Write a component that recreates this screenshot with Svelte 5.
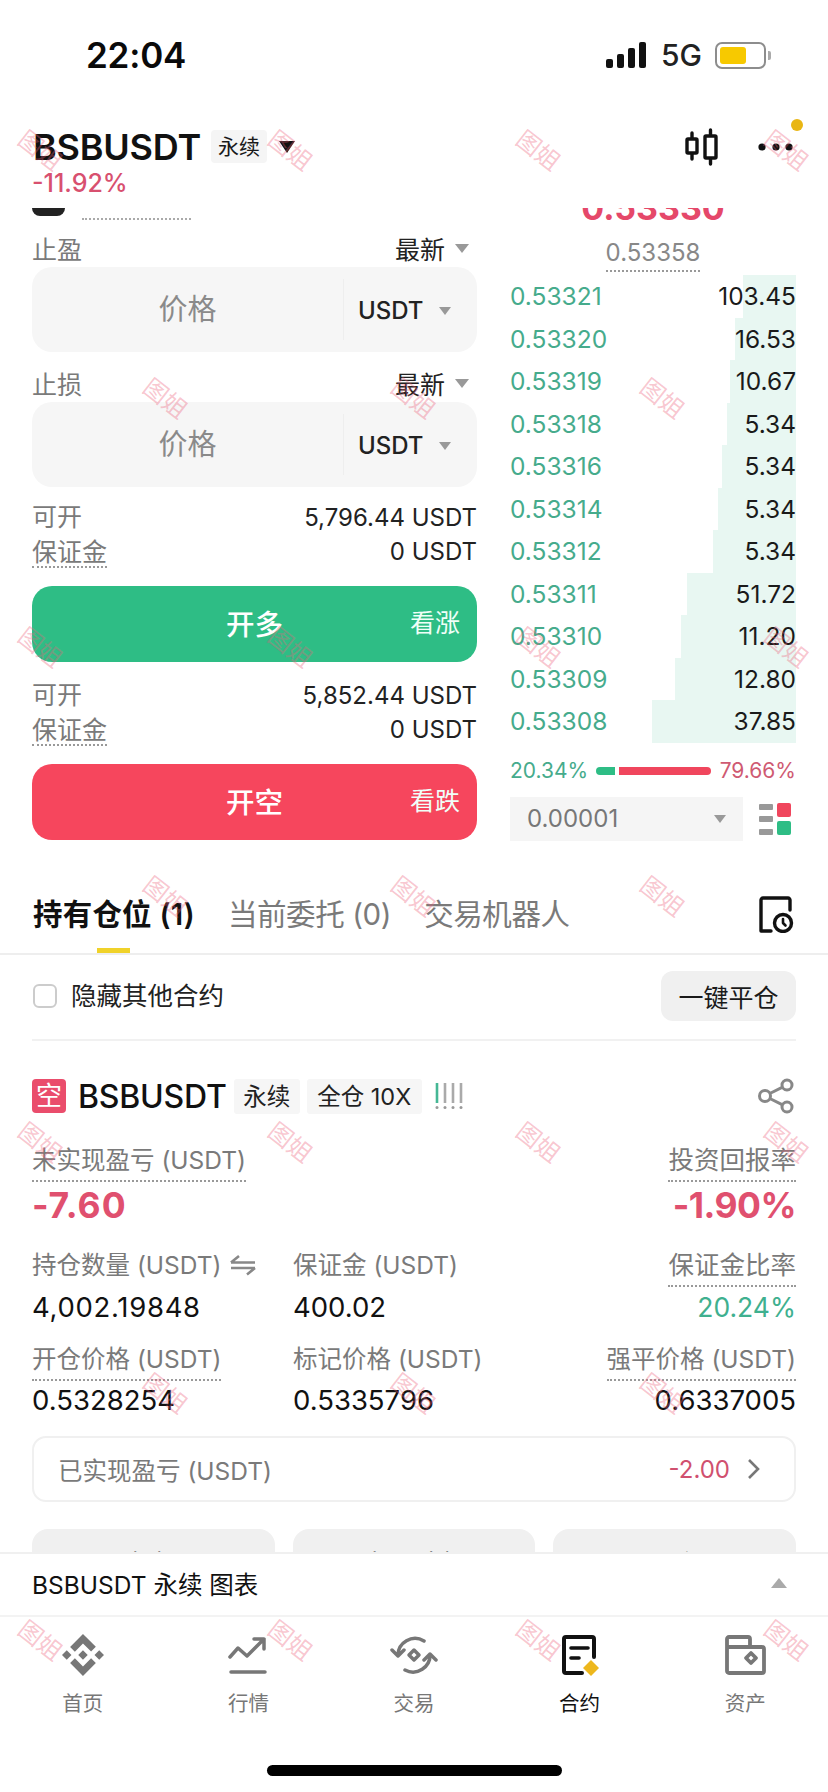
<script>
  const book = [
    ['0.53321','103.45',53],['0.53320','16.53',61],['0.53319','10.67',66],['0.53318','5.34',69],
    ['0.53316','5.34',74],['0.53314','5.34',78],['0.53312','5.34',83],['0.53311','51.72',109],
    ['0.53310','11.20',115],['0.53309','12.80',121],['0.53308','37.85',144]
  ];
  const a = [40,290,538,786], b = [165,413,662];
  const marks = [
    ...a.map(x=>[x,151]), ...b.map(x=>[x,399]), ...a.map(x=>[x,648]), ...b.map(x=>[x,897]),
    ...a.map(x=>[x,1143]), ...b.map(x=>[x,1394]), ...a.map(x=>[x,1641])
  ];
</script>

<div class="app">
  <div class="status">
    <span class="time">22:04</span>
    <div class="status-r">
      <svg width="42" height="28" viewBox="0 0 42 28"><rect x="0" y="18" width="7" height="9" rx="2"/><rect x="11" y="13" width="7" height="14" rx="2"/><rect x="22" y="7" width="7" height="20" rx="2"/><rect x="33" y="1" width="7" height="26" rx="2"/></svg>
      <span class="net">5G</span>
      <div class="battery"><div class="level"></div></div>
      <div class="nub"></div>
    </div>
  </div>

  <header class="header">
    <div class="title-row">
      <span class="symbol">BSBUSDT</span>
      <span class="tag">永续</span>
      <span class="tri-black"></span>
      <div class="head-icons">
        <svg width="36" height="38" viewBox="0 0 36 38" fill="none" stroke="#111" stroke-width="3.4" stroke-linecap="round"><rect x="3" y="11" width="10" height="14" rx="1"/><path d="M8 5v5M8 26v5"/><rect x="21" y="8" width="11" height="22" rx="1"/><path d="M26.500 2v5M26.500 31v5"/></svg>
        <svg class="dots" width="36" height="10" viewBox="0 0 36 10" fill="#111"><circle cx="4" cy="5" r="3.600"/><circle cx="18" cy="5" r="3.600"/><circle cx="31" cy="5" r="3.600"/></svg>
      </div>
      <span class="badge"></span>
    </div>
    <div class="change">-11.92%</div>
  </header>

  <main class="scroll">
    <section class="trade">
      <div class="form">
        <div class="prev"><span class="pill"></span><span class="prev-dots"></span></div>
        <div class="lab-row first"><span class="muted">止盈</span><span class="pick">最新<i class="tri"></i></span></div>
        <div class="input"><span class="ph">价格</span><span class="unit">USDT<i class="tri small"></i></span></div>
        <div class="lab-row"><span class="muted">止损</span><span class="pick">最新<i class="tri"></i></span></div>
        <div class="input"><span class="ph">价格</span><span class="unit">USDT<i class="tri small"></i></span></div>
        <div class="info top"><span class="muted cap">可开</span><span>5,796.44 USDT</span></div>
        <div class="info"><span class="muted dotted">保证金</span><span>0 USDT</span></div>
        <button class="action long"><span>开多</span><em>看涨</em></button>
        <div class="info top2"><span class="muted cap">可开</span><span>5,852.44 USDT</span></div>
        <div class="info"><span class="muted dotted">保证金</span><span>0 USDT</span></div>
        <button class="action short"><span>开空</span><em>看跌</em></button>
      </div>
      <div class="side">
        <div class="last"><span>0.53330</span></div>
        <div class="mark"><span>0.53358</span></div>
        <div class="book">
          {#each book as [p, q, w]}
            <div class="level-row">
              <div class="depth" style="width:{w}px"></div>
              <span class="price">{p}</span><span class="qty">{q}</span>
            </div>
          {/each}
        </div>
        <div class="ratio">
          <span class="g">20.34%</span>
          <span class="bar-g"></span><span class="bar-r"></span>
          <span class="r">79.66%</span>
        </div>
        <div class="sel-row">
          <div class="sel"><span>0.00001</span><i class="tri small"></i></div>
          <svg width="32" height="32" viewBox="0 0 32 32"><rect x="0" y="1" width="14" height="6" rx="1" fill="#999"/><rect x="0" y="13" width="14" height="6" rx="1" fill="#999"/><rect x="0" y="26" width="14" height="6" rx="1" fill="#999"/><rect x="18" y="0" width="14" height="14" rx="2" fill="#f0465d"/><rect x="18" y="18" width="14" height="14" rx="2" fill="#2ebd85"/></svg>
        </div>
      </div>
    </section>

    <nav class="tabs">
      <span class="tab on">持有仓位 (1)<i class="under"></i></span>
      <span class="tab">当前委托 (0)</span>
      <span class="tab">交易机器人</span>
      <svg class="hist" width="38" height="38" viewBox="0 0 38 38" fill="none" stroke="#111" stroke-width="3.400" stroke-linecap="round" stroke-linejoin="round"><path d="M32 15V5a2 2 0 0 0-2-2H5a2 2 0 0 0-2 2v31h10"/><circle cx="25" cy="28" r="8.500"/><path d="M25 24v4l2.500 2.500" stroke-width="2.600"/></svg>
    </nav>

    <div class="hide-row">
      <span class="check"></span>
      <span class="hide-t">隐藏其他合约</span>
      <button class="close-all">一键平仓</button>
    </div>

    <div class="pos-head">
      <span class="side-tag">空</span>
      <span class="pos-sym">BSBUSDT</span>
      <span class="ptag">永续</span>
      <span class="ptag wide">全仓 10X</span>
      <svg class="risk" width="28" height="28" viewBox="0 0 28 28"><g stroke-width="2.600"><path d="M2 1v20" stroke="#45b795"/><path d="M10 1v20M18 1v20M26 1v20" stroke="#aaa"/></g><g fill="#999"><circle cx="2" cy="25.500" r="1.500"/><circle cx="10" cy="25.500" r="1.500"/><circle cx="18" cy="25.500" r="1.500"/><circle cx="26" cy="25.500" r="1.500"/></g></svg>
      <svg class="share" width="36" height="36" viewBox="0 0 36 36" fill="none" stroke="#888" stroke-width="3"><circle cx="29" cy="7" r="5"/><circle cx="7" cy="18" r="5.500"/><circle cx="29" cy="29" r="5"/><path d="M11.800 15.500 24.600 9.200M11.800 20.500l12.800 6.300"/></svg>
    </div>

    <div class="stats s1">
      <div class="cell"><span class="k dotted">未实现盈亏 (USDT)</span><span class="big pnl">-7.60</span></div>
      <div class="cell"></div>
      <div class="cell end"><span class="k dotted zh">投资回报率</span><span class="big roi">-1.90%</span></div>
    </div>
    <div class="stats s2">
      <div class="cell"><span class="k swap">持仓数量 (USDT)<svg width="28" height="24" viewBox="0 0 28 24" fill="none" stroke="#888" stroke-width="2.600"><path d="M2 9.500h24M2 9.500 10 3M2 15h24M26 15l-8 6.500"/></svg></span><span class="v size">4,002.19848</span></div>
      <div class="cell"><span class="k">保证金 (USDT)</span><span class="v">400.02</span></div>
      <div class="cell end"><span class="k dotted zh">保证金比率</span><span class="v green">20.24%</span></div>
    </div>
    <div class="stats s3">
      <div class="cell"><span class="k dotted">开仓价格 (USDT)</span><span class="v">0.5328254</span></div>
      <div class="cell"><span class="k">标记价格 (USDT)</span><span class="v">0.5335796</span></div>
      <div class="cell end"><span class="k dotted">强平价格 (USDT)</span><span class="v">0.6337005</span></div>
    </div>

    <div class="realized">
      <span class="muted">已实现盈亏 (USDT)</span>
      <span class="rv">-2.00</span>
      <svg width="14" height="22" viewBox="0 0 14 22" fill="none" stroke="#777" stroke-width="2.600"><path d="M2 2l9 9-9 9"/></svg>
    </div>

    <div class="btns"><button>杠杆</button><button>止盈/止损</button><button>平仓</button></div>
  </main>

  <div class="chartbar"><span>BSBUSDT 永续 图表</span><i class="tri-up"></i></div>

  <footer class="tabbar">
    <div class="items">
      <div class="item">
        <svg width="42" height="42" viewBox="0 0 24 24" fill="#777"><path d="M16.624 13.9202l2.7175 2.7154-7.353 7.353-7.353-7.352 2.7175-2.7164 4.6355 4.6595 4.6356-4.6595zm4.6366-4.6366L24 12l-2.7154 2.7164L18.5682 12l2.6924-2.7164zm-9.272.001l2.7163 2.6914-2.7164 2.7174v-.001L9.2721 12l2.7164-2.7154zm-9.2722-.001L5.4088 12l-2.6914 2.6924L0 12l2.7164-2.7164zM11.9885.0115l7.353 7.329-2.7174 2.7154-4.6356-4.6356-4.6355 4.6595-2.7174-2.7154 7.353-7.353z"/></svg>
        <span>首页</span>
      </div>
      <div class="item">
        <svg width="42" height="42" viewBox="0 0 42 42" fill="none" stroke="#777" stroke-width="3.500" stroke-linecap="round" stroke-linejoin="round"><path d="M3 23l8-9 9 8 17-17M27 5h10v10M4 38h34"/></svg>
        <span>行情</span>
      </div>
      <div class="item">
        <svg width="50" height="42" viewBox="0 0 50 42" fill="none" stroke="#777" stroke-width="3.500" stroke-linecap="round" stroke-linejoin="round"><path d="M9 22A17 17 0 0 1 35 7M3 16l6 6 6-6M41 20A17 17 0 0 1 16 36M35 26l6-6 6 6"/><path d="M25 16l5 5-5 5-5-5z"/></svg>
        <span>交易</span>
      </div>
      <div class="item on">
        <svg width="42" height="42" viewBox="0 0 42 42" fill="none"><path d="M35 23V5a2 2 0 0 0-2-2H7a2 2 0 0 0-2 2v32a2 2 0 0 0 2 2h16" stroke="#111" stroke-width="4" stroke-linecap="round"/><path d="M12 14h17M12 24h8" stroke="#111" stroke-width="3.600" stroke-linecap="round"/><path d="M32 26l8 8-8 8-8-8z" fill="#edb71d"/></svg>
        <span>合约</span>
      </div>
      <div class="item">
        <svg width="42" height="42" viewBox="0 0 42 42" fill="none" stroke="#777" stroke-width="3.800" stroke-linejoin="round"><path d="M3 13V5a2 2 0 0 1 2-2h19a2 2 0 0 1 2 2v8h12a2 2 0 0 1 2 2v22a2 2 0 0 1-2 2H5a2 2 0 0 1-2-2V13h23"/><path d="M27 19l5 5-5 5-5-5z"/></svg>
        <span>资产</span>
      </div>
    </div>
    <div class="home"></div>
  </footer>

  {#each marks as [x, y]}
    <span class="wm" style="left:{x}px;top:{y}px">图姐</span>
  {/each}
</div>

<style>
  :global(body) { margin: 0; background: #fff; }
  * { box-sizing: border-box; }
  .app {
    position: relative; width: 828px; height: 1792px; overflow: hidden; background: #fff;
    display: flex; flex-direction: column; color: #1a1a1a;
    font-family: Inter, "Noto Sans CJK SC", sans-serif; font-size: 24px;
  }
  i, em { font-style: normal; display: block; }
  button { border: 0; font: inherit; color: inherit; padding: 0; }
  .muted { color: #7a7a7a; }
  .dotted { border-bottom: 2px dotted #999; }

  .status { height: 110px; flex: none; display: flex; align-items: center; justify-content: space-between; padding: 0 57px 0 86px; }
  .time { font-size: 35px; font-weight: 600; color: #0a0a0a; letter-spacing: -0.2px; }
  .status-r { display: flex; align-items: center; }
  .status-r svg { fill: #111; margin-right: 13px; }
  .net { font-size: 30px; font-weight: 500; width: 54px; color: #222; }
  .battery { width: 51px; height: 27px; border: 2px solid #8d8d8d; border-radius: 7px; padding: 3px; background: #fff; }
  .level { width: 26px; height: 100%; background: #f7c900; border-radius: 3px; }
  .nub { width: 3px; height: 9px; background: #aaa; border-radius: 0 2px 2px 0; margin-left: 2px; }

  .header { position: relative; height: 98px; flex: none; padding: 20px 32px 0 33px; }
  .title-row { display: flex; align-items: center; height: 33px; }
  .symbol { font-size: 36px; font-weight: 600; letter-spacing: -0.2px; color: #111; }
  .tag { margin-left: 10px; width: 56px; height: 33px; background: #f5f5f5; border-radius: 4px; font-size: 21px; line-height: 33px; text-align: center; }
  .tri-black { margin-left: 12px; width: 0; height: 0; border: 8.500px solid transparent; border-top: 12px solid #111; border-bottom: 0; }
  .head-icons { margin-left: auto; display: flex; align-items: center; gap: 38px; margin-right: 2px; }
  .badge { position: absolute; left: 791px; top: 9px; width: 12px; height: 12px; border-radius: 50%; background: #e9b613; }
  .change { margin-top: 7px; margin-left: -1px; font-size: 25px; line-height: 26px; font-weight: 500; color: #d8506f; }

  .scroll { flex: 1; min-height: 0; overflow: hidden; }
  .trade { display: grid; grid-template-columns: 445px 286px; column-gap: 33px; padding: 0 32px; height: 632px; }
  .form { display: flex; flex-direction: column; }
  .prev { height: 13px; display: flex; align-items: flex-start; }
  .pill { width: 33px; height: 8px; background: #222; border-radius: 0 0 8px 8px; }
  .prev-dots { margin: 10px 0 0 17px; width: 109px; border-top: 2px dotted #aaa; }
  .lab-row { height: 35px; margin-top: 15px; display: flex; align-items: center; justify-content: space-between; padding: 0 0 3px 0; font-size: 25px; }
  .lab-row.first { margin-top: 11px; }
  .pick { display: flex; align-items: center; gap: 10px; margin-right: 8px; color: #222; }
  .tri { width: 0; height: 0; border: 7.500px solid transparent; border-top: 9px solid #999; border-bottom: 0; }
  .tri.small { border-width: 8px 6.500px 0; border-top-color: #999; border-bottom: 0; }
  .input { height: 85px; flex: none; background: #f6f6f6; border-radius: 20px; display: flex; align-items: center; }
  .ph { width: 311px; text-align: center; font-size: 29px; line-height: 34px; padding-top: 1px; color: #8a8a8a; }
  .unit { flex: 1; height: 61px; border-left: 1px solid #eee; display: flex; align-items: center; gap: 15px; padding: 2px 0 0 14px; font-weight: 500; color: #222; }
  .info { height: 34px; display: flex; justify-content: space-between; align-items: center; color: #222; }
  .info .muted { font-size: 25px; }
  .info .cap { line-height: 30px; padding-bottom: 1px; }
  .info .dotted { line-height: 36px; height: 34px; }
  .info.top { margin-top: 13px; }
  .info.top2 { margin-top: 16px; }
  .action { margin-top: 18px; height: 76px; flex: none; border-radius: 20px; color: #fff; display: flex; align-items: center; position: relative; font-family: inherit; }
  .action span { width: 100%; text-align: center; font-size: 28.500px; font-weight: 500; padding-bottom: 4px; }
  .action em { position: absolute; right: 17px; top: 19px; font-size: 25px; line-height: 36px; color: #f0fff8; }
  .long { background: #2ebd85; }
  .short { background: #f6465d; }

  .side { display: flex; flex-direction: column; min-width: 0; }
  .last { height: 13px; overflow: hidden; display: flex; justify-content: center; align-items: flex-end; }
  .last span { font-size: 34px; font-weight: 700; line-height: 26px; color: #e5486a; flex: none; }
  .mark { margin-top: 14px; text-align: center; color: #888; line-height: 35px; height: 37px; }
  .mark span { display: inline-block; border-bottom: 2px dotted #999; }
  .book { margin-top: 3px; font-size: 24.500px; }
  .level-row { position: relative; height: 42.500px; display: flex; justify-content: space-between; align-items: center; }
  .depth { position: absolute; right: 0; top: 0; bottom: 0; background: #e8f7f2; }
  .price, .qty { position: relative; }
  .price { color: #46ab8c; }
  .qty { color: #1a1a1a; }
  .ratio { margin-top: 16px; height: 24px; display: flex; align-items: center; font-size: 21px; }
  .ratio .g { color: #46ab8c; width: 86px; flex: none; }
  .ratio .r { color: #cf5a72; margin-left: auto; }
  .bar-g { width: 19px; height: 8px; background: #2ebd85; border-radius: 4px 0 0 4px; }
  .bar-r { width: 92px; height: 8px; margin-left: 4px; background: #f0465d; border-radius: 0 4px 4px 0; }
  .sel-row { margin-top: 14px; height: 44px; display: flex; align-items: center; justify-content: space-between; padding-right: 5px; }
  .sel { width: 233px; height: 44px; background: #f5f5f5; display: flex; align-items: center; justify-content: space-between; padding: 0 17px; color: #777; }

  .tabs { position: relative; height: 115px; padding: 57px 32px 0 33px; border-bottom: 2px solid #eee; display: flex; gap: 33px; align-items: flex-start; }
  .tab { position: relative; font-size: 29.500px; line-height: 34px; color: #7a7a7a; white-space: nowrap; letter-spacing: -0.4px; }
  .tab.on { color: #111; font-weight: 600; letter-spacing: 0.2px; }
  .under { position: absolute; left: 64px; top: 51px; width: 33px; height: 5px; background: #f0d22a; }
  .hist { position: absolute; right: 32px; top: 55px; }

  .hide-row { margin: 0 32px; height: 86px; padding-top: 16px; border-bottom: 2px solid #f1f1f1; display: flex; align-items: flex-start; }
  .check { margin: 13px 14px 0 1px; width: 24px; height: 24px; border: 2px solid #ccc; border-radius: 6px; }
  .hide-t { line-height: 50px; font-size: 25.500px; color: #222; }
  .close-all { margin-left: auto; width: 135px; height: 50px; background: #f0f0f0; border-radius: 12px; font-size: 25px; }

  .pos-head { margin: 38px 32px 0; height: 34px; display: flex; align-items: center; }
  .side-tag { width: 34px; height: 34px; background: #ea4d6c; border-radius: 4px; color: #fff; font-size: 26px; line-height: 34px; text-align: center; }
  .pos-sym { margin-left: 12px; font-size: 32px; font-weight: 500; color: #111; letter-spacing: -0.2px; }
  .ptag { margin-left: 7px; width: 66px; height: 35px; background: #f6f6f6; border-radius: 3px; font-size: 23.500px; line-height: 35px; text-align: center; color: #222; white-space: nowrap; }
  .ptag.wide { width: 115px; }
  .risk { margin-left: 13px; }
  .share { margin-left: auto; margin-right: 2px; }

  .stats { margin: 0 32px; display: grid; grid-template-columns: 261px 1fr auto; }
  .s1 { margin-top: 32px; }
  .s2 { margin-top: 24px; }
  .s3 { margin-top: 19px; }
  .cell { display: flex; flex-direction: column; align-items: flex-start; }
  .cell.end { align-items: flex-end; }
  .k { font-size: 24.500px; line-height: 30px; height: 37px; color: #7a7a7a; white-space: nowrap; }
  .k.zh { font-size: 25.500px; }
  .k.swap { display: flex; gap: 8px; }
  .k.swap svg { margin-top: 3px; }
  .big { margin-top: 4px; font-size: 35.500px; line-height: 40px; font-weight: 700; color: #e0506f; }
  .pnl { letter-spacing: 1px; }
  .roi { letter-spacing: -0.5px; }
  .v { font-size: 27.500px; line-height: 36px; color: #111; margin-top: 2px; }
  .v.size { letter-spacing: 0.7px; }
  .s3 .v { margin-top: 1px; }
  .v.green { color: #3fb08f; font-size: 26.500px; }

  .realized { margin: 18px 32px 0; height: 66px; border: 2px solid #f0f0f0; border-radius: 14px; display: flex; align-items: center; padding: 0 33px 0 24px; }
  .realized .muted { font-size: 24.500px; }
  .rv { margin-left: auto; margin-right: 17px; color: #d0506f; }

  .btns { margin: 27px 32px 0; display: grid; grid-template-columns: repeat(3, 1fr); gap: 18px; }
  .btns button { height: 64px; background: #f0f0f0; border-radius: 16px 16px 0 0; }

  .chartbar { flex: none; height: 65px; background: #fff; border-top: 2px solid #f0f0f0; border-bottom: 2px solid #f3f3f3; display: flex; align-items: center; justify-content: space-between; padding: 0 41px 3px 32px; font-size: 24.500px; color: #111; }
  .tri-up { width: 0; height: 0; border: 8px solid transparent; border-bottom: 10px solid #aaa; border-top: 0; }

  .tabbar { flex: none; height: 175px; display: flex; flex-direction: column; align-items: center; padding-top: 17px; }
  .items { width: 100%; display: flex; }
  .item { flex: 1; display: flex; flex-direction: column; align-items: center; }
  .item svg { height: 42px; }
  .item span { margin-top: 13px; font-size: 20.500px; line-height: 30px; color: #777; }
  .item.on span { color: #111; }
  .home { margin-top: 46px; width: 295px; height: 11px; border-radius: 6px; background: #000; }

  .wm { position: absolute; transform: translate(-50%, -50%) rotate(38deg); font-size: 24px; line-height: 1; color: rgba(236, 96, 122, .36); white-space: nowrap; pointer-events: none; }
</style>
